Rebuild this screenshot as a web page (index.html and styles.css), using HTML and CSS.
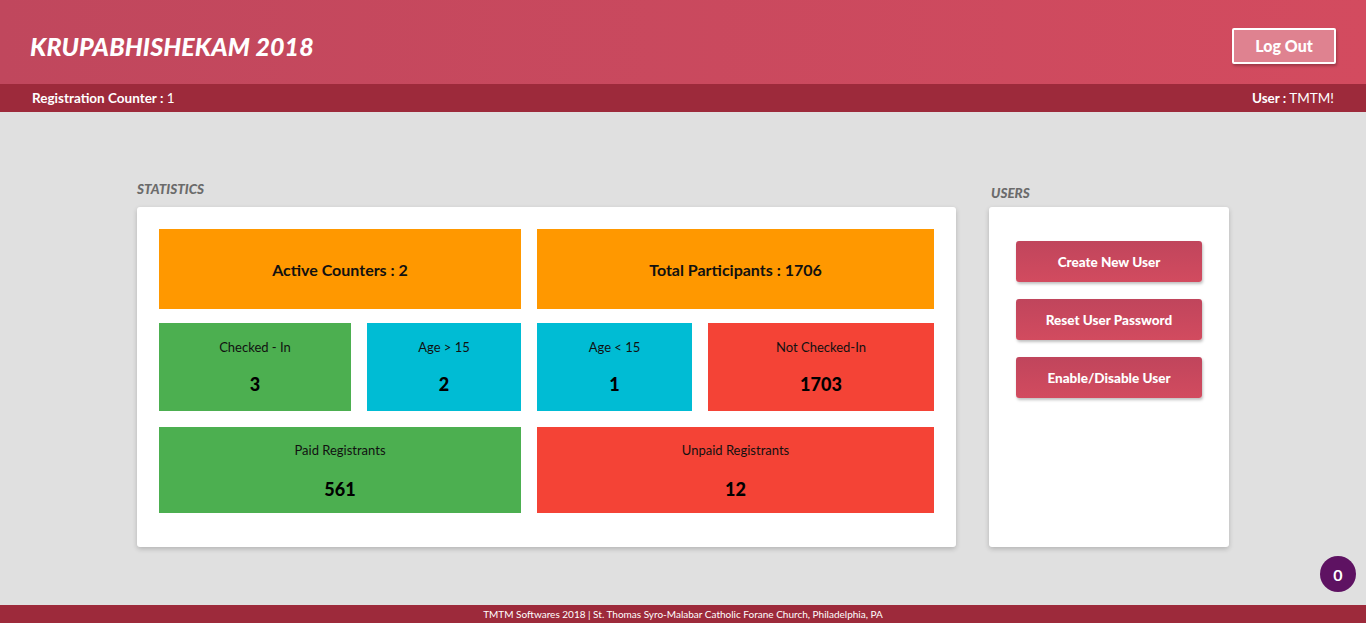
FILE: index.html
```html
<!doctype html>
<html lang="en">
<head>
    <meta charset="UTF-8">
    <meta name="viewport" content="width=device-width, initial-scale=1.0">
    <title>Krupabhishekam 2018 - Admin</title>
    <link rel="stylesheet" href="styles.css">
</head>
<body>
    <header class="top-bar">
        <h1 class="brand">KRUPABHISHEKAM 2018</h1>
        <button class="logout">Log Out</button>
    </header>

    <div class="sub-bar">
        <span><b>Registration Counter :</b> 1</span>
        <span><b>User :</b> TMTM!</span>
    </div>

    <main class="dashboard">
        <section class="stats">
            <h2 class="section-title">STATISTICS</h2>
            <div class="card stats-card">
                <div class="row row-top">
                    <div class="tile orange wide-l"><strong>Active Counters : 2</strong></div>
                    <div class="tile orange wide-r"><strong>Total Participants : 1706</strong></div>
                </div>
                <div class="row row-mid">
                    <div class="tile green"><span>Checked - In</span><strong class="num">3</strong></div>
                    <div class="tile cyan"><span>Age &gt; 15</span><strong class="num">2</strong></div>
                    <div class="tile cyan"><span>Age &lt; 15</span><strong class="num">1</strong></div>
                    <div class="tile red"><span>Not Checked-In</span><strong class="num">1703</strong></div>
                </div>
                <div class="row row-bottom">
                    <div class="tile green wide-l"><span>Paid Registrants</span><strong class="num">561</strong></div>
                    <div class="tile red wide-r"><span>Unpaid Registrants</span><strong class="num">12</strong></div>
                </div>
            </div>
        </section>

        <section class="users">
            <h2 class="section-title users-title">USERS</h2>
            <div class="card users-card">
                <button class="action">Create New User</button>
                <button class="action">Reset User Password</button>
                <button class="action">Enable/Disable User</button>
            </div>
        </section>
    </main>

    <footer class="bottom-bar">TMTM Softwares 2018 | St. Thomas Syro-Malabar Catholic Forane Church, Philadelphia, PA</footer>

    <div class="badge">0</div>
</body>
</html>
```

FILE: styles.css
```css
:root {
    --cl-brand-a: #c0475d;
    --cl-brand-b: #d34b5f;
    --cl-dark: #9d2a3b;
    --cl-page: #e0e0e0;
    --cl-orange: #ff9800;
    --cl-green: #4caf50;
    --cl-cyan: #00bcd4;
    --cl-red: #f44336;
    --cl-label: #6b6b6b;
}

html, body {
    font-family: Lato, 'Open Sans', sans-serif;
    padding: 0;
    margin: 0;
    width: 100%;
    height: 100%;
}

body {
    display: grid;
    grid-template-rows: 84px 28px 1fr 18px;
    background: var(--cl-page);
    overflow: hidden;
}

.top-bar {
    display: flex;
    align-items: center;
    justify-content: space-between;
    padding: 7px 30px 0;
    background: linear-gradient(to right, var(--cl-brand-a), var(--cl-brand-b));
}

.brand {
    margin: 0;
    color: white;
    font-size: 25px;
    font-style: italic;
    font-weight: 900;
    letter-spacing: 0.1px;
}

.logout {
    width: 104px;
    height: 36px;
    border: solid 2px white;
    border-radius: 2px;
    background: #df8290;
    color: white;
    font-family: inherit;
    font-size: 16px;
    font-weight: 900;
    box-shadow: 1px 2px 3px rgba(0, 0, 0, 0.25);
}

.sub-bar {
    display: flex;
    align-items: center;
    justify-content: space-between;
    padding: 0 32px;
    background: var(--cl-dark);
    color: white;
    font-size: 13.5px;
}

.dashboard {
    display: flex;
    justify-content: center;
    gap: 33px;
    padding-top: 70px;
}

.section-title {
    margin: 0 0 11px;
    height: 14px;
    line-height: 14px;
    color: var(--cl-label);
    font-size: 13.5px;
    font-style: italic;
    font-weight: 900;
}

.users-title {
    margin-top: 4px;
    margin-bottom: 7px;
    padding-left: 2px;
}

.card {
    background: white;
    border-radius: 3px;
    box-shadow: 0 2px 5px rgba(0, 0, 0, 0.2);
    box-sizing: border-box;
    height: 340px;
}

.stats-card {
    width: 819px;
    padding: 22px;
}

.users-card {
    width: 240px;
    padding: 34px 27px;
    display: flex;
    flex-direction: column;
    gap: 17px;
}

.row {
    display: grid;
    gap: 16px;
}

.row-top, .row-bottom {
    grid-template-columns: 362px 397px;
}

.row-top { height: 80px; margin-bottom: 14px; }
.row-mid { height: 88px; margin-bottom: 16px; grid-template-columns: 192px 154px 155px 226px; }
.row-bottom { height: 86px; }

.tile {
    display: flex;
    flex-direction: column;
    align-items: center;
    justify-content: center;
    color: #111;
    font-size: 13px;
}

.row-top .tile strong {
    font-size: 16px;
    padding-top: 1px;
}

.tile .num {
    margin-top: 18px;
    font-size: 18px;
    font-weight: 900;
    color: black;
}

.row-mid .tile span { margin-top: 0; }
.row-bottom .tile span { margin-top: 1px; }
.row-bottom .tile .num { margin-top: 20px; }

.orange { background: var(--cl-orange); }
.green { background: var(--cl-green); }
.cyan { background: var(--cl-cyan); }
.red { background: var(--cl-red); }

.action {
    width: 186px;
    height: 41px;
    border: none;
    border-radius: 3px;
    background: linear-gradient(to bottom, #c0455c, #d24b5f);
    color: white;
    font-family: inherit;
    font-size: 13.5px;
    font-weight: 900;
    box-shadow: 1px 2px 3px rgba(0, 0, 0, 0.25);
}

.bottom-bar {
    display: flex;
    align-items: center;
    justify-content: center;
    background: var(--cl-dark);
    color: white;
    font-size: 10px;
}

.badge {
    position: fixed;
    right: 10px;
    bottom: 31px;
    width: 36px;
    height: 36px;
    border-radius: 50%;
    background: #5e1262;
    color: white;
    font-size: 16px;
    font-weight: 700;
    display: flex;
    align-items: center;
    justify-content: center;
}
```
